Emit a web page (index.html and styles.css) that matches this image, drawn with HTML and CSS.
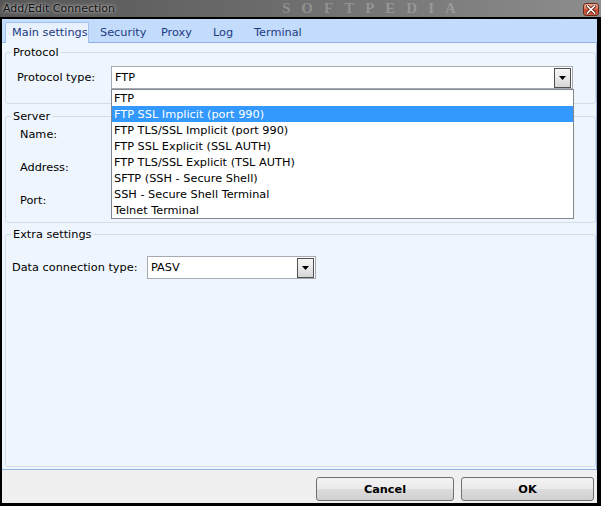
FILE: index.html
```html
<!DOCTYPE html>
<html>
<head>
<meta charset="utf-8">
<title>Add/Edit Connection</title>
<link rel="stylesheet" href="styles.css">
</head>
<body>
<div class="window">
  <div class="titlebar">
    <span class="title">Add/Edit Connection</span>
    <span class="watermark">SOFTPEDIA</span>
    <div class="close">
      <svg width="10" height="9" viewBox="0 0 10 9"><path d="M1.5 1 L8.5 8 M8.5 1 L1.5 8" stroke="#5a1a10" stroke-width="3.2" stroke-linecap="square"/><path d="M1.5 1 L8.5 8 M8.5 1 L1.5 8" stroke="#fff" stroke-width="1.6" stroke-linecap="square"/></svg>
    </div>
  </div>
  <div class="frame">
    <div class="tabs">
      <div class="tab active">Main settings</div>
      <div class="tab tab-security">Security</div>
      <div class="tab tab-proxy">Proxy</div>
      <div class="tab tab-log">Log</div>
      <div class="tab tab-terminal">Terminal</div>
    </div>
    <div class="content">
      <fieldset class="group group-protocol">
        <legend>Protocol</legend>
        <div class="row row-protocol">
          <span class="label label-protocol">Protocol type:</span>
          <div class="combo combo-protocol">
            <span class="combo-text">FTP</span>
            <span class="combo-btn"><svg width="7" height="4" viewBox="0 0 7 4"><path d="M0 0 H7 L3.5 4 Z" fill="#000"/></svg></span>
            <div class="dropdown">
              <div class="opt">FTP</div>
              <div class="opt sel">FTP SSL Implicit (port 990)</div>
              <div class="opt">FTP TLS/SSL Implicit (port 990)</div>
              <div class="opt">FTP SSL Explicit (SSL AUTH)</div>
              <div class="opt">FTP TLS/SSL Explicit (TSL AUTH)</div>
              <div class="opt">SFTP (SSH - Secure Shell)</div>
              <div class="opt">SSH - Secure Shell Terminal</div>
              <div class="opt">Telnet Terminal</div>
            </div>
          </div>
        </div>
      </fieldset>
      <fieldset class="group group-server">
        <legend>Server</legend>
        <div class="server-rows">
          <div class="row"><span class="label label-server">Name:</span><div class="field"></div></div>
          <div class="row"><span class="label label-server">Address:</span><div class="field"></div></div>
          <div class="row"><span class="label label-server">Port:</span><div class="field"></div></div>
        </div>
      </fieldset>
      <fieldset class="group group-extra">
        <legend>Extra settings</legend>
        <div class="row row-extra">
          <span class="label label-extra">Data connection type:</span>
          <div class="combo combo-data">
            <span class="combo-text">PASV</span>
            <span class="combo-btn"><svg width="7" height="4" viewBox="0 0 7 4"><path d="M0 0 H7 L3.5 4 Z" fill="#000"/></svg></span>
          </div>
        </div>
      </fieldset>
    </div>
    <div class="footer">
      <button class="btn btn-cancel">Cancel</button>
      <button class="btn btn-ok">OK</button>
    </div>
  </div>
</div>
</body>
</html>
```

FILE: styles.css
```css
* { box-sizing: border-box; }
html, body { margin: 0; padding: 0; }
body {
  width: 601px;
  height: 506px;
  overflow: hidden;
  font-family: "DejaVu Sans", "Liberation Sans", sans-serif;
  font-size: 11.3px;
  color: #000;
  background: #fff;
}
.window {
  width: 601px;
  height: 506px;
  display: flex;
  flex-direction: column;
}
.titlebar {
  position: relative;
  height: 17px;
  flex: none;
  display: flex;
  align-items: center;
  padding-left: 3px;
  background: linear-gradient(to right, #565656 0%, #6c6c6c 45%, #8d8d8d 100%);
}
.title {
  font-size: 11px;
  color: #101010;
  text-shadow: 0 0 3px rgba(255,255,255,0.75), 0 0 6px rgba(255,255,255,0.4);
  white-space: nowrap;
}
.watermark {
  position: absolute;
  left: 282px;
  top: 0;
  font-family: "Liberation Serif", serif;
  font-weight: bold;
  font-size: 15px;
  line-height: 17px;
  letter-spacing: 11px;
  color: rgba(215,215,215,0.32);
  white-space: nowrap;
}
.close {
  margin-left: auto;
  margin-right: 2px;
  margin-top: 2px;
  width: 16px;
  height: 13px;
  border: 1px solid #6e2a1c;
  border-radius: 3px;
  background: linear-gradient(#ecad98 0%, #d9735a 45%, #c2462c 55%, #cf6a4a 100%);
  display: flex;
  align-items: center;
  justify-content: center;
}
.frame {
  flex: 1;
  display: flex;
  flex-direction: column;
  border-style: solid;
  border-color: #000;
  border-width: 2px 4px 3px 2px;
  min-height: 0;
}
.tabs {
  height: 24px;
  flex: none;
  display: flex;
  align-items: flex-end;
  padding-left: 3px;
  background: #c3dcfc;
  border-bottom: 1px solid #8fb2e0;
}
.tab {
  height: 20px;
  display: flex;
  align-items: center;
  color: #1d3a82;
  white-space: nowrap;
}
.tab.active {
  width: 84px;
  height: 21px;
  margin-bottom: -1px;
  padding-left: 6px;
  padding-bottom: 1px;
  background: linear-gradient(#e6f0fd, #eef5fd);
  border: 1px solid #a3c2ea;
  border-bottom: none;
  border-radius: 2px 2px 0 0;
}
.tab-security { margin-left: 11px; width: 61px; }
.tab-proxy { width: 52px; }
.tab-log { width: 41px; }
.content {
  flex: 1;
  display: flex;
  flex-direction: column;
  background: #eef5fd;
  border-right: 1px solid #97b3dd;
  border-bottom: 1px solid #97b3dd;
  padding: 0 0 2px 3px;
  min-height: 0;
}
.group {
  margin: 0;
  padding: 0;
  min-width: 0;
  border: 1px solid #d3dde8;
  border-radius: 3px;
}
.group legend {
  margin-left: 5px;
  padding: 2px 2px 0;
  height: 16px;
  line-height: 14px;
}
.group-protocol { margin-top: 1px; height: 60px; flex: none; }
.group-server { margin-top: 4px; height: 115px; flex: none; }
.group-extra { margin-top: 3px; flex: 1; }
.row {
  display: flex;
  align-items: center;
}
.label { white-space: nowrap; flex: none; }
.row-protocol { margin-top: 6px; padding-left: 11px; }
.label-protocol { width: 94px; }
.server-rows {
  margin-top: -1px;
  padding-left: 14px;
  display: flex;
  flex-direction: column;
  gap: 10px;
}
.label-server { width: 91px; }
.field {
  width: 462px;
  height: 23px;
  border: 1px solid #a6abb3;
  background: #fff;
}
.row-extra { margin-top: 14px; padding-left: 6px; }
.label-extra { width: 135px; }
.combo {
  position: relative;
  height: 23px;
  border: 1px solid #a6abb3;
  background: #fff;
  display: flex;
  align-items: center;
  padding-left: 3px;
}
.combo-protocol { width: 462px; z-index: 10; }
.combo-data { width: 169px; }
.combo-text { white-space: nowrap; }
.combo-btn {
  margin-left: auto;
  margin-right: 1px;
  width: 17px;
  height: 20px;
  border: 1px solid #505050;
  background: linear-gradient(#f6f6f6 0%, #e8e8e8 50%, #d6d6d6 100%);
  display: flex;
  align-items: center;
  justify-content: center;
}
.dropdown {
  position: absolute;
  top: 22px;
  left: -1px;
  width: 463px;
  height: 130px;
  border: 1px solid #828790;
  background: #fff;
}
.opt {
  height: 16px;
  line-height: 16px;
  padding-left: 2px;
  padding-top: 1px;
  white-space: nowrap;
}
.opt.sel {
  background: #3399ff;
  color: #fff;
}
.footer {
  height: 33px;
  flex: none;
  display: flex;
  justify-content: flex-end;
  align-items: flex-start;
  gap: 7px;
  padding: 7px 3px 0 0;
  background: #f0f0f0;
}
.btn {
  height: 24px;
  margin: 0;
  padding: 0;
  border: 1px solid #707070;
  border-radius: 3px;
  background: linear-gradient(#f3f3f3 0%, #ebebeb 48%, #dddddd 52%, #cfcfcf 100%);
  font-family: "DejaVu Sans", "Liberation Sans", sans-serif;
  font-size: 11.3px;
  font-weight: bold;
  color: #000;
  display: flex;
  align-items: center;
  justify-content: center;
}
.btn-cancel { width: 138px; }
.btn-ok { width: 133px; }
```
